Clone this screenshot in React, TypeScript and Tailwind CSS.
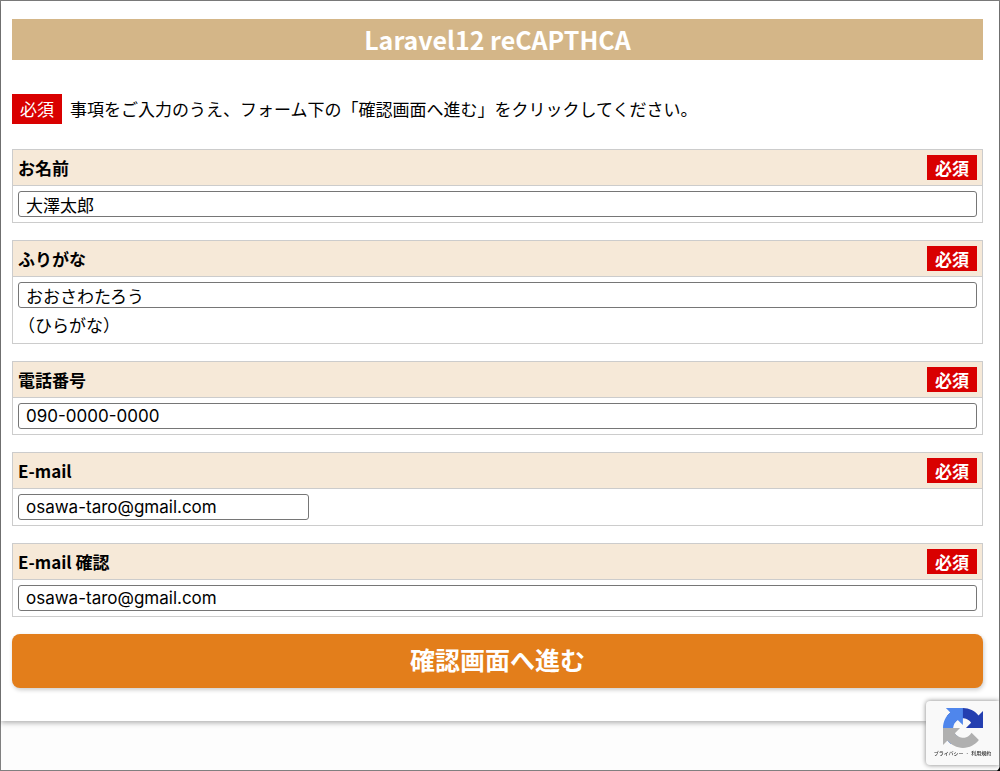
import type { ReactNode } from 'react';

interface FieldProps {
  id: string;
  label: string;
  value: string;
  type?: string;
  inputClassName?: string;
  note?: ReactNode;
}

function Field({ id, label, value, type = 'text', inputClassName = 'w-full', note }: FieldProps) {
  return (
    <div className="border border-[#ccc]">
      <div className="flex h-9 items-center justify-between border-b border-[#ccc] bg-[#f6e9d8] px-[5px] font-bold">
        <label htmlFor={id}>{label}</label>
        <span className="bg-[#d90000] px-2 leading-[25px] text-white">必須</span>
      </div>
      <div className="p-[5px]">
        <input
          id={id}
          name={id}
          type={type}
          defaultValue={value}
          className={`block h-[26px] rounded-[3px] border border-[#767676] bg-white px-[7px] font-['Inter','Noto_Sans_CJK_JP',sans-serif] ${inputClassName}`}
        />
        {note && <p className="pt-1 leading-[26px]">{note}</p>}
      </div>
    </div>
  );
}

function RecaptchaLogo() {
  return (
    <svg viewBox="0 0 64 64" className="size-10" aria-hidden="true">
      <path
        fill="#243fb0"
        d="M64 31.955a33.3 33.3 0 0 0-.03-1.37V4.687l-7.16 7.16C50.95 4.674 42.033.093 32.05.093c-10.4 0-19.622 4.96-25.458 12.64l11.736 11.86a15.55 15.55 0 0 1 4.754-5.334c2.05-1.6 4.952-2.906 8.968-2.906.485 0 .86.057 1.135.163 4.976.393 9.288 3.14 11.828 7.124l-8.307 8.307L64 31.953"
      />
      <path
        fill="#4f86ec"
        d="M31.862.094a33.4 33.4 0 0 0-1.37.03H4.594l7.16 7.16C4.58 13.147 0 22.06 0 32.046c0 10.4 4.96 19.622 12.64 25.458L24.5 45.768a15.55 15.55 0 0 1-5.334-4.754c-1.6-2.05-2.906-4.952-2.906-8.968 0-.485.057-.86.163-1.135.393-4.976 3.14-9.288 7.124-11.828l8.307 8.307L31.86.095"
      />
      <path
        fill="#b0b0b0"
        d="M.001 32.045a33.4 33.4 0 0 0 .03 1.37v25.898l7.16-7.16c5.86 7.173 14.774 11.754 24.76 11.754 10.4 0 19.622-4.96 25.458-12.64l-11.736-11.86a15.55 15.55 0 0 1-4.754 5.334c-2.05 1.6-4.952 2.906-8.968 2.906-.485 0-.86-.057-1.135-.163-4.976-.393-9.288-3.14-11.828-7.124l8.307-8.307c-10.522.04-22.4.066-27.295-.005"
      />
    </svg>
  );
}

function RecaptchaBadge() {
  return (
    <div className="fixed right-px bottom-[6px] flex w-[73px] flex-col items-center rounded-l-sm bg-[#f9f9f9] pt-[7px] pb-2 shadow-[0_0_5px_gray]">
      <RecaptchaLogo />
      <div className="flex gap-[3px] pt-px text-[5px] leading-[8px] font-medium whitespace-nowrap text-[#333]">
        <a href="#privacy">プライバシー</a>
        <span>-</span>
        <a href="#terms">利用規約</a>
      </div>
    </div>
  );
}

export default function App() {
  return (
    <div
      lang="ja"
      className="flex min-h-screen flex-col border border-[#808080] bg-[#fdfdfd] font-['Noto_Sans_CJK_JP',sans-serif] text-[17px] text-black"
    >
      <main className="bg-white pt-[18px] pr-4 pb-[33px] pl-[11px] shadow-[0_2px_5px_rgba(0,0,0,0.3)]">
        <h1 className="bg-[#d4b688] text-center text-[25px] leading-[41px] font-bold text-white">
          Laravel12 reCAPTHCA
        </h1>
        <p className="flex items-center gap-2 pt-[34px] pb-[25px] leading-[30px]">
          <span className="bg-[#d90000] px-2 text-white">必須</span>
          事項をご入力のうえ、フォーム下の「確認画面へ進む」をクリックしてください。
        </p>
        <form className="flex flex-col gap-[17px]" onSubmit={(e) => e.preventDefault()}>
          <Field id="name" label="お名前" value="大澤太郎" />
          <Field id="kana" label="ふりがな" value="おおさわたろう" note="（ひらがな）" />
          <Field id="tel" label="電話番号" type="tel" value="090-0000-0000" />
          <Field
            id="email"
            label="E-mail"
            type="email"
            value="osawa-taro@gmail.com"
            inputClassName="w-[291px]"
          />
          <Field id="email_confirm" label="E-mail 確認" type="email" value="osawa-taro@gmail.com" />
          <button
            type="submit"
            className="w-full rounded-lg bg-[#e37e1b] pb-1 text-[25px] leading-[50px] font-bold text-white shadow-[1px_2px_4px_rgba(0,0,0,0.2)]"
          >
            確認画面へ進む
          </button>
        </form>
      </main>
      <RecaptchaBadge />
      <svg viewBox="0 0 3 4" className="fixed right-0 bottom-0 h-1 w-[3px]" aria-hidden="true">
        <path d="M3 0v4H0z" />
      </svg>
    </div>
  );
}
